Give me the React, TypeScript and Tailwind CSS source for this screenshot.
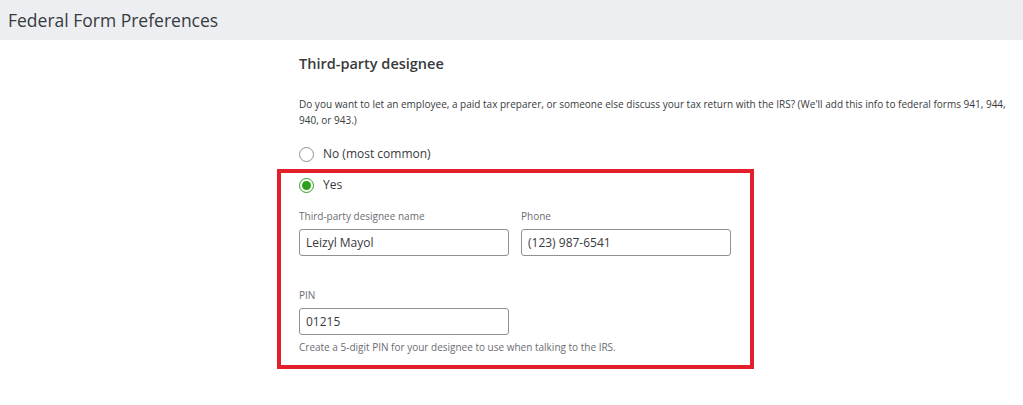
import { useState } from 'react';

function Radio({ checked, label, onClick }: { checked: boolean; label: string; onClick: () => void }) {
  return (
    <label className="flex items-center gap-[9px] cursor-pointer" onClick={onClick}>
      <span
        className={
          checked
            ? 'w-[15px] h-[15px] rounded-full border border-[#2ca01c] flex items-center justify-center bg-white'
            : 'w-[15px] h-[15px] rounded-full border border-[#8d9096] bg-white'
        }
      >
        {checked && <span className="w-[9px] h-[9px] rounded-full bg-[#2ca01c]" />}
      </span>
      <span className="text-[12px] text-[#393a3d]">{label}</span>
    </label>
  );
}

function Field({ label, value, className = '' }: { label: string; value: string; className?: string }) {
  return (
    <div className={`flex flex-col ${className}`}>
      <span className="text-[10px] text-[#6b6c72] leading-[14px] mb-[6px]">{label}</span>
      <input
        className="w-[210px] h-[27px] border border-[#8d9096] rounded-[3px] px-[6px] text-[12px] text-[#393a3d] outline-none"
        defaultValue={value}
      />
    </div>
  );
}

export default function App() {
  const [designee, setDesignee] = useState<'no' | 'yes'>('yes');

  return (
    <div className="w-[1023px] h-[405px] bg-white overflow-hidden font-['Open_Sans','Noto_Sans',sans-serif]">
      <div className="h-[40px] bg-[#eceef1] flex items-center pl-[8px]">
        <h1 className="text-[17.5px] text-[#393a3d]">Federal Form Preferences</h1>
      </div>

      <div className="pl-[299px] pt-[14px]">
        <h2 className="text-[14.5px] font-semibold text-[#393a3d] leading-[20px]">Third-party designee</h2>

        <p className="mt-[22px] text-[10px] leading-[16px] text-[#393a3d] w-[724px]">
          Do you want to let an employee, a paid tax preparer, or someone else discuss your tax return with the IRS?
          (We'll add this info to federal forms 941, 944, 940, or 943.)
        </p>

        <div className="mt-[17px]">
          <Radio checked={designee === 'no'} label="No (most common)" onClick={() => setDesignee('no')} />
        </div>

        {/* highlighted block for the designee details */}
        <div className="-ml-[22px] mt-[6px] w-[477px] border-4 border-[#e41f2c] pl-[18px] pt-[3px] pb-[11px]">
          <Radio checked={designee === 'yes'} label="Yes" onClick={() => setDesignee('yes')} />

          <div className="flex gap-[12px] mt-[15px]">
            <Field label="Third-party designee name" value="Leizyl Mayol" />
            <Field label="Phone" value="(123) 987-6541" />
          </div>

          <Field className="mt-[32px]" label="PIN" value="01215" />
          <p className="mt-[5px] text-[10px] text-[#6b6c72] leading-[14px]">
            Create a 5-digit PIN for your designee to use when talking to the IRS.
          </p>
        </div>
      </div>
    </div>
  );
}
